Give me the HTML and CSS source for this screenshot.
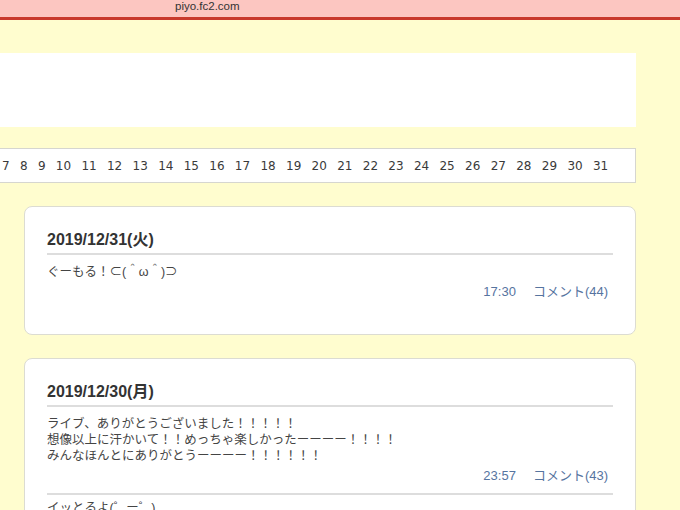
FILE: index.html
```html
<!DOCTYPE html>
<html lang="ja">
<head>
<meta charset="utf-8">
<title>piyo.fc2.com</title>
<link rel="stylesheet" href="styles.css">
</head>
<body>
<div class="urlbar"><span class="url">piyo.fc2.com</span></div>
<div class="page">
  <div class="banner"></div>
  <div class="calendar">
    <a>7</a><a>8</a><a>9</a><a>10</a><a>11</a><a>12</a><a>13</a><a>14</a><a>15</a><a>16</a><a>17</a><a>18</a><a>19</a><a>20</a><a>21</a><a>22</a><a>23</a><a>24</a><a>25</a><a>26</a><a>27</a><a>28</a><a>29</a><a>30</a><a>31</a>
  </div>
  <div class="card">
    <div class="post">
      <h2 class="date">2019/12/31(火)</h2>
      <p class="body">ぐーもる！⊂(＾ω＾)⊃</p>
      <p class="meta"><span class="time">17:30</span><span class="comment">コメント(44)</span></p>
    </div>
  </div>
  <div class="card">
    <div class="post">
      <h2 class="date">2019/12/30(月)</h2>
      <p class="body">ライブ、ありがとうございました！！！！！<br>想像以上に汗かいて！！めっちゃ楽しかったーーーー！！！！<br>みんなほんとにありがとうーーーー！！！！！！</p>
      <p class="meta"><span class="time">23:57</span><span class="comment">コメント(43)</span></p>
    </div>
    <div class="post">
      <p class="body">イッとるよ(゜ー゜)</p>
    </div>
  </div>
</div>
</body>
</html>
```

FILE: styles.css
```css
html, body {
  margin: 0;
  padding: 0;
  background: #fffdcf;
  overflow: hidden;
}
body {
  font-family: "Liberation Sans", "Noto Sans CJK JP", sans-serif;
  color: #444;
}
.urlbar {
  height: 17px;
  background: #fcc6c1;
  border-bottom: 3px solid #c8392c;
}
.url {
  display: block;
  padding-left: 175px;
  font-size: 11.5px;
  line-height: 12px;
  color: #333;
}
.page {
  width: 636px;
}
.banner {
  margin-top: 33px;
  height: 74px;
  background: #ffffff;
}
.calendar {
  margin-top: 21px;
  height: 33px;
  background: #fff;
  border: 1px solid #d6d6d0;
  border-left: none;
  display: flex;
  align-items: center;
  gap: 10.3px;
  padding-left: 2px;
  font-family: "DejaVu Sans", Verdana, sans-serif;
  font-size: 12px;
  color: #3a3a3a;
}
.calendar a {
  display: block;
  line-height: 14px;
}
.card {
  margin: 23px 0 0 24px;
  background: #fff;
  border: 1px solid #dcdcd2;
  border-radius: 8px;
  padding: 23px 22px 25px 22px;
}
.post {
  padding-bottom: 9px;
}
.post + .post {
  border-top: 2px solid #dddddd;
  padding-top: 5px;
}
.date {
  margin: 0;
  font-size: 16px;
  line-height: 20px;
  font-weight: bold;
  color: #333;
  padding-bottom: 3px;
  border-bottom: 2px solid #dddddd;
}
.body {
  margin: 9px 0 0 0;
  font-size: 12.5px;
  line-height: 16px;
  color: #444;
}
.post + .post .body {
  margin-top: 0;
}
.meta {
  margin: 4px 0 0 0;
  padding-right: 5px;
  display: flex;
  justify-content: flex-end;
  gap: 17px;
  font-size: 13px;
  line-height: 16px;
  color: #56749f;
}
```
